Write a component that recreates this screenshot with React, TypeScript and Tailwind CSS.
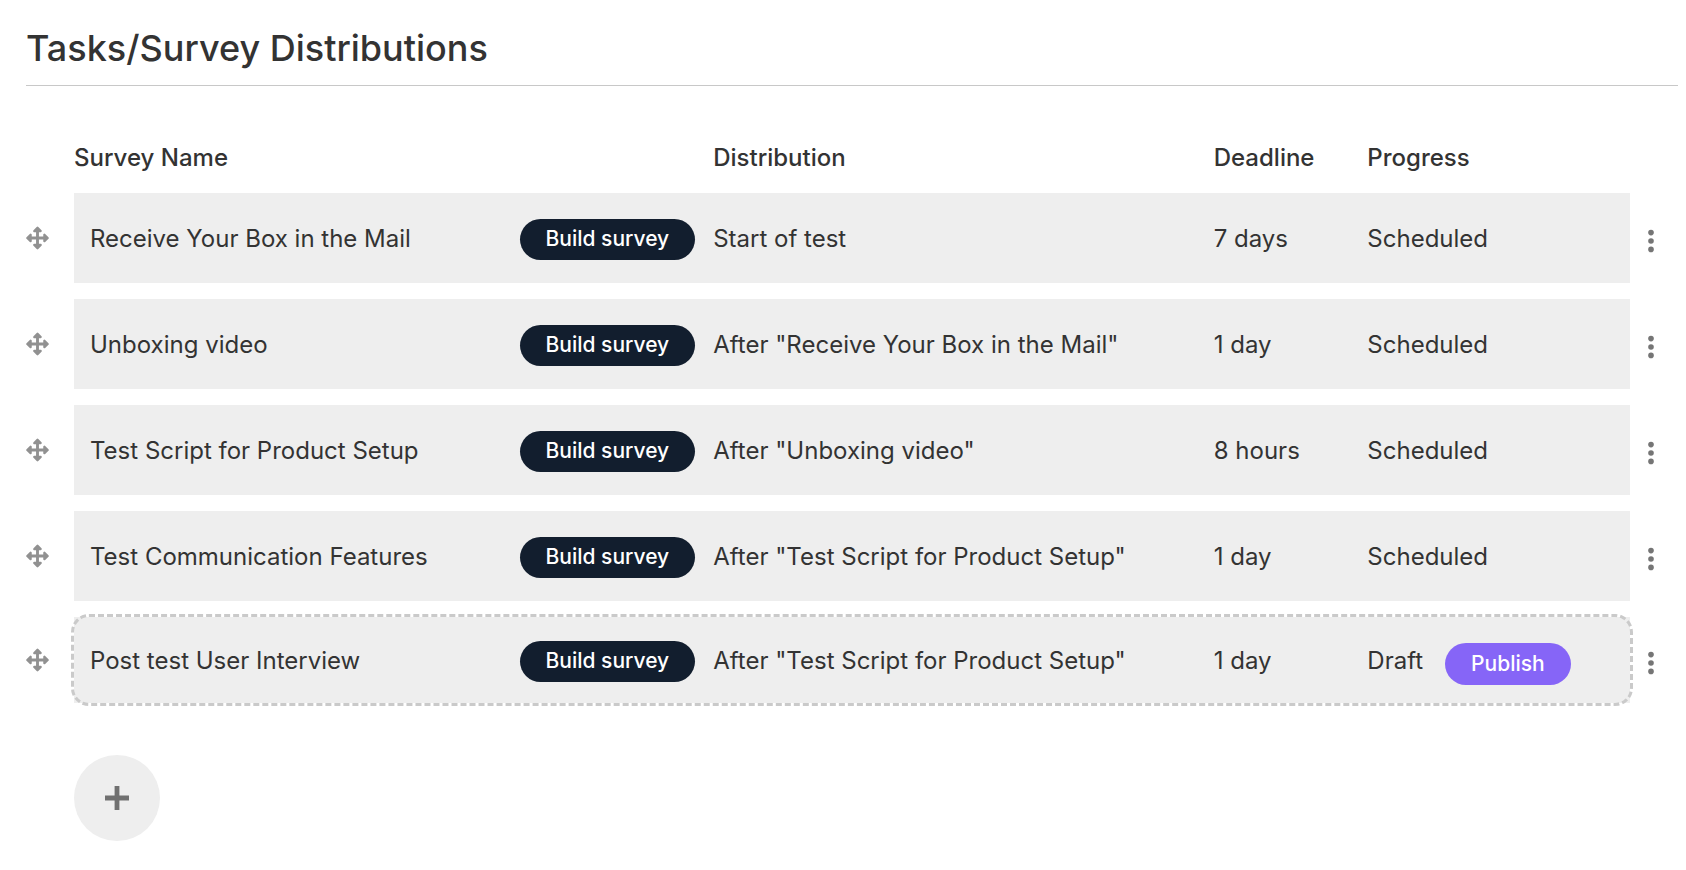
type Survey = {
  name: string;
  distribution: string;
  deadline: string;
  progress: string;
  draft?: boolean;
};

const surveys: Survey[] = [
  {
    name: "Receive Your Box in the Mail",
    distribution: "Start of test",
    deadline: "7 days",
    progress: "Scheduled",
  },
  {
    name: "Unboxing video",
    distribution: 'After "Receive Your Box in the Mail"',
    deadline: "1 day",
    progress: "Scheduled",
  },
  {
    name: "Test Script for Product Setup",
    distribution: 'After "Unboxing video"',
    deadline: "8 hours",
    progress: "Scheduled",
  },
  {
    name: "Test Communication Features",
    distribution: 'After "Test Script for Product Setup"',
    deadline: "1 day",
    progress: "Scheduled",
  },
  {
    name: "Post test User Interview",
    distribution: 'After "Test Script for Product Setup"',
    deadline: "1 day",
    progress: "Draft",
    draft: true,
  },
];

function MoveIcon() {
  return (
    <svg width="23" height="24" viewBox="0 0 24 24" fill="currentColor" stroke="currentColor" strokeLinejoin="round">
      <path d="M12 4v16M4 12h16" strokeWidth="3" />
      <path
        d="M12 1.4 8.7 4.8h6.6zM12 22.6l-3.3-3.4h6.6zM1.4 12l3.4-3.3v6.6zM22.6 12l-3.4-3.3v6.6z"
        strokeWidth="2.4"
      />
    </svg>
  );
}

function DotsIcon() {
  return (
    <svg width="6" height="24" viewBox="0 0 6 24" fill="currentColor">
      <circle cx="3" cy="3.6" r="2.8" />
      <circle cx="3" cy="12" r="2.8" />
      <circle cx="3" cy="20.4" r="2.8" />
    </svg>
  );
}

function SurveyRow({ survey }: { survey: Survey }) {
  return (
    <tr className={survey.draft ? "relative h-[86px]" : "h-[90px]"}>
      <td>
        <button aria-label={`Move ${survey.name}`} className="block cursor-move text-[#919191]">
          <MoveIcon />
        </button>
      </td>
      <td className="bg-[#eeeeee] pl-4 pr-[18px] pt-0.5">
        <div className="flex items-center justify-between gap-4">
          <span>{survey.name}</span>
          <button className="h-[41px] shrink-0 cursor-pointer rounded-full bg-[#121e2e] px-[26px] text-[21px] font-medium text-white">
            Build survey
          </button>
        </div>
      </td>
      <td className="bg-[#eeeeee] pt-0.5">{survey.distribution}</td>
      <td className="bg-[#eeeeee] pt-0.5">{survey.deadline}</td>
      <td className="bg-[#eeeeee] pt-0.5">
        <div className="flex items-center gap-[22px]">
          {survey.progress}
          {survey.draft && (
            <button className="mt-1.5 h-[42px] cursor-pointer rounded-full bg-[#8665f7] px-[26px] text-[21px] font-medium text-white">
              Publish
            </button>
          )}
        </div>
      </td>
      <td>
        <button aria-label={`Options for ${survey.name}`} className="ml-[18px] block cursor-pointer pt-1.5 text-[#757575]">
          <DotsIcon />
        </button>
        {/* dashed frame around the draft */}
        {survey.draft && (
          <span className="pointer-events-none absolute -inset-y-[3px] left-[45px] right-[45px] rounded-[18px] border-3 border-dashed border-[#cacaca]" />
        )}
      </td>
    </tr>
  );
}

export default function App() {
  return (
    <main className="min-h-screen bg-white pb-7 pl-[26px] pr-2 pt-6 font-['Inter',sans-serif] text-2xl text-[#333333]">
      <h1 className="border-b border-[#c8c8c8] pb-3 text-4xl/[49px] font-medium">
        Tasks/Survey Distributions
      </h1>

      <table className="mt-8 w-full table-fixed border-separate border-spacing-x-0 border-spacing-y-4 text-left">
        <colgroup>
          <col className="w-12" />
          <col />
          <col className="w-[30.3%]" />
          <col className="w-[9.3%]" />
          <col className="w-[15.9%]" />
          <col className="w-12" />
        </colgroup>
        <thead>
          <tr className="h-[43px]">
            <td />
            <th className="pt-1 font-medium">Survey Name</th>
            <th className="pt-1 font-medium">Distribution</th>
            <th className="pt-1 font-medium">Deadline</th>
            <th className="pt-1 font-medium">Progress</th>
            <td />
          </tr>
        </thead>
        <tbody>
          {surveys.map((survey) => (
            <SurveyRow key={survey.name} survey={survey} />
          ))}
        </tbody>
      </table>

      <button
        aria-label="Add survey"
        className="ml-12 mt-9 flex size-[86px] cursor-pointer items-center justify-center rounded-full bg-[#eeeeee] text-[#707070]"
      >
        <svg width="24" height="24" viewBox="0 0 24 24" fill="currentColor">
          <path d="M9.6 0h4.8v9.6H24v4.8h-9.6V24H9.6v-9.6H0V9.6h9.6z" />
        </svg>
      </button>
    </main>
  );
}
